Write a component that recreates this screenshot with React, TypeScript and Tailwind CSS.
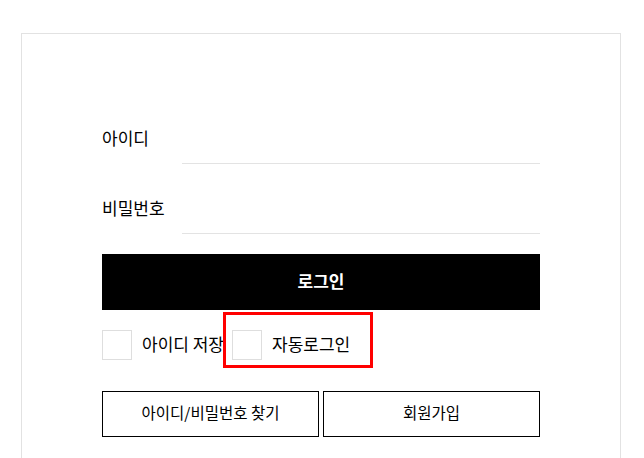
const font = { fontFamily: '"Noto Sans CJK KR", "Noto Sans", sans-serif' };

function Field({ label }: { label: string }) {
  return (
    <div className="flex items-center">
      <label className="w-[80px] shrink-0 pb-[4px] text-[17px] leading-none text-black">{label}</label>
      <div className="h-[50px] flex-1 border-b border-[#e3e3e3]" />
    </div>
  );
}

function Check() {
  return <span className="block h-[30px] w-[30px] shrink-0 border border-[#dedede] bg-white" />;
}

export default function App() {
  return (
    <div className="min-h-[458px] bg-white pt-[33px]" style={font}>
      <div className="ml-[21px] w-[600px] border border-[#e2e2e2] px-[80px] pt-[80px] pb-[60px]">
        <Field label="아이디" />
        <div className="mt-[20px]">
          <Field label="비밀번호" />
        </div>

        <button className="mt-[20px] flex h-[56px] w-full items-center justify-center bg-black pb-[2px] text-[17px] font-bold text-white">
          로그인
        </button>

        {/* remember / auto login */}
        <div className="mt-[20px] flex items-start">
          <div className="flex w-[121px] shrink-0 items-center gap-[10px] whitespace-nowrap text-[17px] text-black">
            <Check />
            <span className="pb-[2px]">아이디 저장</span>
          </div>
          <div className="relative -mt-[18px] -mb-[8px] flex w-[150px] items-center gap-[10px] border-[3px] border-[#ff0000] bg-white pt-[15px] pb-[5px] pl-[6px] text-[17px] text-black">
            <Check />
            <span className="pb-[2px]">자동로그인</span>
          </div>
        </div>

        <div className="mt-[31px] flex gap-[4px]">
          <button className="flex h-[46px] flex-1 items-center justify-center border border-black pb-[2px] text-[15.5px] text-black">
            아이디/비밀번호 찾기
          </button>
          <button className="flex h-[46px] flex-1 items-center justify-center border border-black pb-[2px] text-[15.5px] text-black">
            회원가입
          </button>
        </div>
      </div>
    </div>
  );
}
